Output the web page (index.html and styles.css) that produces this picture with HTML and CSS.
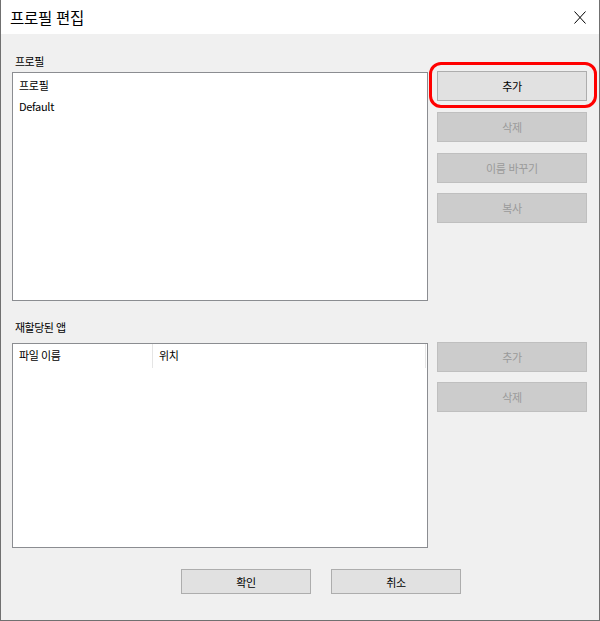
FILE: index.html
```html
<!DOCTYPE html>
<html lang="ko">
<head>
<meta charset="utf-8">
<title>프로필 편집</title>
<link rel="stylesheet" href="styles.css">
</head>
<body>
<div class="window">
  <div class="titlebar">
    <span class="title">프로필 편집</span>
    <svg class="close" width="12" height="13" viewBox="0 0 12 13"><path d="M0.5 0.5 L11.5 12.5 M11.5 0.5 L0.5 12.5" stroke="#000" stroke-width="1" fill="none"/></svg>
  </div>
  <div class="content">
    <div class="section first">
      <div class="left">
        <div class="label">프로필</div>
        <div class="listbox list1">
          <div class="item">프로필</div>
          <div class="item">Default</div>
        </div>
      </div>
      <div class="buttons b1">
        <div class="btn">추가</div>
        <div class="btn disabled">삭제</div>
        <div class="btn disabled">이름 바꾸기</div>
        <div class="btn disabled">복사</div>
      </div>
    </div>
    <div class="section second">
      <div class="left">
        <div class="label label2">재할당된 앱</div>
        <div class="listbox list2">
          <div class="header">
            <div class="col c1">파일 이름</div>
            <div class="col c2">위치</div>
          </div>
        </div>
      </div>
      <div class="buttons b2">
        <div class="btn disabled">추가</div>
        <div class="btn disabled">삭제</div>
      </div>
    </div>
    <div class="footer">
      <div class="btn fbtn">확인</div>
      <div class="btn fbtn">취소</div>
    </div>
  </div>
  <div class="highlight"></div>
</div>
</body>
</html>
```
FILE: styles.css
```css
html, body {
  margin: 0;
  padding: 0;
}
body {
  font-family: "Noto Sans CJK KR", "Noto Sans", sans-serif;
  font-size: 11px;
  color: #000;
  background: #fff;
}
.window {
  position: relative;
  width: 600px;
  height: 621px;
  box-sizing: border-box;
  border-left: 1px solid #707070;
  border-right: 1px solid #707070;
  border-bottom: 1px solid #707070;
  display: flex;
  flex-direction: column;
}
.titlebar {
  height: 34px;
  background: #fff;
  display: flex;
  align-items: center;
  justify-content: space-between;
  padding: 0 13px 0 9px;
  flex: none;
}
.title {
  font-size: 15.5px;
  letter-spacing: -0.3px;
  line-height: 20px;
}
.close {
  display: block;
  margin-top: 1px;
}
.content {
  flex: 1;
  background: #f0f0f0;
  padding: 19px 11px 0 11px;
  display: flex;
  flex-direction: column;
}
.section {
  display: flex;
  gap: 9px;
}
.left {
  width: 416px;
  display: flex;
  flex-direction: column;
}
.label {
  height: 16px;
  line-height: 16px;
  padding-left: 3px;
  margin-bottom: 3px;
  letter-spacing: -0.5px;
}
.label2 {
  margin-bottom: 8px;
}
.second {
  margin-top: 18px;
}
.listbox {
  background: #fff;
  border: 1px solid #8b8d91;
  box-sizing: border-box;
}
.list1 {
  height: 229px;
  padding-top: 2px;
}
.list2 {
  height: 205px;
}
.item {
  line-height: 21px;
  height: 21px;
  padding-left: 6px;
  letter-spacing: -0.3px;
}
.header {
  display: flex;
  height: 24px;
}
.col {
  line-height: 22px;
  padding-left: 6px;
  box-sizing: border-box;
  border-right: 1px solid #e5e5e5;
  letter-spacing: -0.4px;
}
.c1 {
  width: 140px;
}
.c2 {
  width: 273px;
}
.buttons {
  width: 150px;
  display: flex;
  flex-direction: column;
}
.b1 {
  padding-top: 18px;
  gap: 11px;
}
.b1 .btn:last-child {
  margin-top: -1px;
}
.b2 {
  padding-top: 23px;
  gap: 10px;
}
.btn {
  height: 30px;
  box-sizing: border-box;
  background: #e1e1e1;
  border: 1px solid #adadad;
  display: flex;
  align-items: center;
  justify-content: center;
  letter-spacing: -0.3px;
}
.btn.disabled {
  background: #cccccc;
  border-color: #bfbfbf;
  color: #9a9a9a;
}
.footer {
  display: flex;
  gap: 20px;
  padding-left: 169px;
  margin-top: 21px;
}
.fbtn {
  width: 130px;
  height: 25px;
}
.highlight {
  position: absolute;
  left: 428px;
  top: 62px;
  width: 168px;
  height: 46px;
  box-sizing: border-box;
  border: 3.5px solid #ff0000;
  border-radius: 12px;
}
```
